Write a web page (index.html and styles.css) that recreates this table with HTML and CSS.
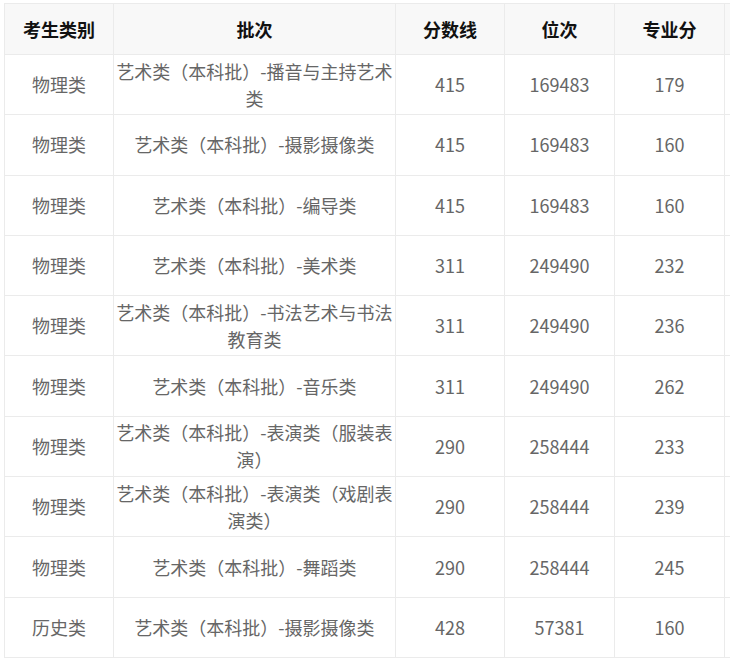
FILE: index.html
```html
<!DOCTYPE html>
<html lang="zh-CN">
<head>
<meta charset="utf-8">
<title>分数线</title>
<link rel="stylesheet" href="styles.css">
</head>
<body>
<div class="wrap">
<table class="score">
  <colgroup>
    <col class="c1"><col class="c2"><col class="c3"><col class="c4"><col class="c5"><col class="c6">
  </colgroup>
  <thead>
    <tr><th>考生类别</th><th>批次</th><th>分数线</th><th>位次</th><th>专业分</th><th></th></tr>
  </thead>
  <tbody>
    <tr><td>物理类</td><td>艺术类（本科批）-播音与主持艺术类</td><td>415</td><td>169483</td><td>179</td><td></td></tr>
    <tr><td>物理类</td><td>艺术类（本科批）-摄影摄像类</td><td>415</td><td>169483</td><td>160</td><td></td></tr>
    <tr><td>物理类</td><td>艺术类（本科批）-编导类</td><td>415</td><td>169483</td><td>160</td><td></td></tr>
    <tr><td>物理类</td><td>艺术类（本科批）-美术类</td><td>311</td><td>249490</td><td>232</td><td></td></tr>
    <tr><td>物理类</td><td>艺术类（本科批）-书法艺术与书法教育类</td><td>311</td><td>249490</td><td>236</td><td></td></tr>
    <tr><td>物理类</td><td>艺术类（本科批）-音乐类</td><td>311</td><td>249490</td><td>262</td><td></td></tr>
    <tr><td>物理类</td><td>艺术类（本科批）-表演类（服装表演）</td><td>290</td><td>258444</td><td>233</td><td></td></tr>
    <tr><td>物理类</td><td>艺术类（本科批）-表演类（戏剧表演类）</td><td>290</td><td>258444</td><td>239</td><td></td></tr>
    <tr><td>物理类</td><td>艺术类（本科批）-舞蹈类</td><td>290</td><td>258444</td><td>245</td><td></td></tr>
    <tr><td>历史类</td><td>艺术类（本科批）-摄影摄像类</td><td>428</td><td>57381</td><td>160</td><td></td></tr>
  </tbody>
</table>
</div>
</body>
</html>
```

FILE: styles.css
```css
html, body {
  margin: 0;
  padding: 0;
  overflow: hidden;
  background: #fff;
}
.wrap {
  padding: 3px 0 0 4px;
  width: 730px;
  height: 661px;
  overflow: hidden;
  box-sizing: border-box;
}
.score {
  border-collapse: collapse;
  table-layout: fixed;
  width: 840px;
  font-family: "Noto Sans CJK SC", "Noto Sans", sans-serif;
  font-size: 18px;
  line-height: 27px;
}
.c1 { width: 109px; }
.c2 { width: 282px; }
.c3 { width: 109px; }
.c4 { width: 110px; }
.c5 { width: 110px; }
.c6 { width: 120px; }
.score th, .score td {
  border: 1px solid #ebebeb;
  text-align: center;
  vertical-align: middle;
  padding: 0 1px;
}
.score th {
  height: 50px;
  background: #f8f8f8;
  color: #111;
  font-weight: bold;
}
.score td {
  height: 59.3px;
  color: #666;
}
```
